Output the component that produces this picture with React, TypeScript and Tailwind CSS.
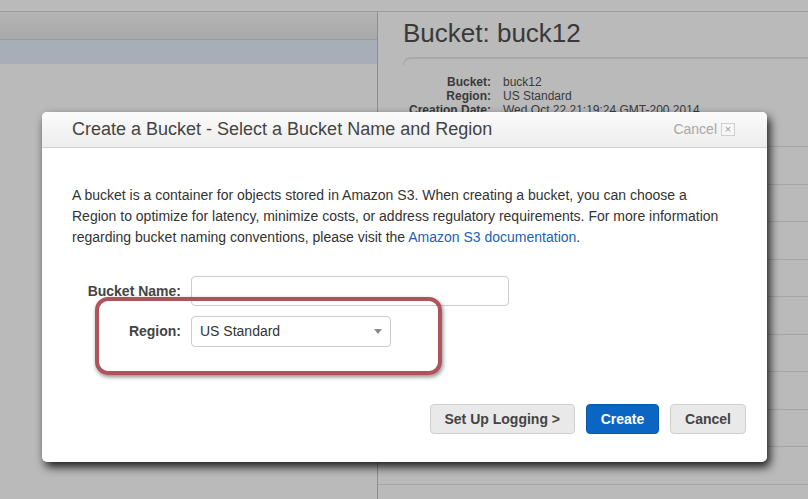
import React from 'react';

const rows = [0, 1, 2, 3, 4, 5, 6, 7, 8];

const App: React.FC = () => {
    return (
        <div className="relative w-[808px] h-[499px] overflow-hidden bg-[#bababa] font-['Liberation_Sans',Arial,sans-serif]">
            {/* Top strip */}
            <div className="h-[12px] border-b border-[#9d9d9d]" />

            {/* Page behind the overlay */}
            <div className="flex h-[487px]">
                {/* Bucket list */}
                <div className="w-[378px] border-r border-[#8e8e8e]">
                    <div className="h-[28px] bg-gradient-to-b from-[#b5b5b5] to-[#a8a8a8] border-b border-[#9b9b9b]" />
                    <div className="h-[24px] bg-[#a8aeb7]" />
                </div>

                {/* Bucket details */}
                <div className="flex-1 flex flex-col">
                    <div className="pl-[25px]">
                        <h1 className="mt-[8px] text-[26px] leading-[26px] text-[#393939]">Bucket: buck12</h1>
                        <div className="mt-[11px] h-[8px] border-t-2 border-l border-[#a9a9a9] rounded-tl-[8px]" />
                        <div className="mt-[10px] grid grid-cols-[88px_1fr] gap-x-[12px] text-[12px] leading-[14px] text-[#3a3a3a]">
                            <span className="text-right font-bold">Bucket:</span>
                            <span>buck12</span>
                            <span className="text-right font-bold">Region:</span>
                            <span>US Standard</span>
                            <span className="text-right font-bold whitespace-nowrap">Creation Date:</span>
                            <span className="whitespace-nowrap">Wed Oct 22 21:19:24 GMT-200 2014</span>
                        </div>
                    </div>
                    <div className="h-[30px] border-b border-[#a6a6a6]" />
                    {rows.map((r) => (
                        <div key={r} className="h-[37.5px] border-b border-[#a6a6a6]" />
                    ))}
                </div>
            </div>

            {/* Modal */}
            <div className="absolute left-[42px] top-[112px] w-[725px] h-[350px] rounded-[5px] bg-white shadow-[3px_5px_10px_rgba(0,0,0,0.85)] flex flex-col">
                {/* Header */}
                <div className="h-[36px] rounded-t-[5px] bg-gradient-to-b from-[#fbfbfb] to-[#ededed] border-b border-[#cfcfcf] flex items-center justify-between pl-[30px] pr-[32px]">
                    <h2 className="text-[18px] text-[#444]">Create a Bucket - Select a Bucket Name and Region</h2>
                    <button className="flex items-center gap-[4px] text-[14px] text-[#a8a8a8]">
                        Cancel
                        <span className="w-[14px] h-[13px] border border-[#cfcfcf] bg-[#f7f7f7] flex items-center justify-center text-[11px] leading-none text-[#9a9a9a]">×</span>
                    </button>
                </div>

                {/* Body */}
                <div className="flex-1 flex flex-col pl-[30px] pr-[32px] pt-[37px]">
                    <p className="text-[14px] leading-[21px] text-[#333]">
                        A bucket is a container for objects stored in Amazon S3. When creating a bucket, you can choose a Region to optimize for latency, minimize costs, or address regulatory requirements. For more information regarding bucket naming conventions, please visit the <a className="text-[#1a62b8]">Amazon S3 documentation</a>.
                    </p>

                    <div className="mt-[28px] -ml-[30px] flex flex-col gap-[10px]">
                        <div className="flex items-center">
                            <label className="w-[139px] text-right text-[14px] font-bold text-[#444]">Bucket Name:</label>
                            <input className="ml-[10px] w-[318px] h-[30px] rounded-[4px] border border-[#cccccc] px-[8px] text-[14px] outline-none" />
                        </div>
                        <div className="flex items-center">
                            <label className="w-[139px] text-right text-[14px] font-bold text-[#444]">Region:</label>
                            <div className="ml-[10px] w-[200px] h-[31px] rounded-[4px] border border-[#cccccc] pl-[8px] pr-[8px] flex items-center justify-between text-[14px] text-[#333]">
                                <span>US Standard</span>
                                <svg width="8" height="5" viewBox="0 0 8 5">
                                    <path d="M0 0 L8 0 L4 5 Z" fill="#8c8c8c" />
                                </svg>
                            </div>
                        </div>
                    </div>

                    {/* Footer buttons */}
                    <div className="mt-auto mb-[28px] -mr-[11px] flex justify-end gap-[11px]">
                        <button className="h-[30px] px-[14px] rounded-[4px] border border-[#cfcfcf] bg-[#e9e9e9] text-[14px] font-bold text-[#444]">Set Up Logging &gt;</button>
                        <button className="h-[30px] w-[73px] rounded-[4px] border border-[#0a58a8] bg-[#0b66c3] text-[14px] font-bold text-white">Create</button>
                        <button className="h-[30px] w-[76px] rounded-[4px] border border-[#cfcfcf] bg-[#e9e9e9] text-[14px] font-bold text-[#444]">Cancel</button>
                    </div>
                </div>

                {/* Annotation highlight */}
                <div className="absolute left-[53px] top-[185px] w-[347px] h-[78px] rounded-[13px] border-4 border-[#b0545c] shadow-[1px_2px_4px_rgba(0,0,0,0.45)] pointer-events-none" />
            </div>
        </div>
    );
};

export default App;
